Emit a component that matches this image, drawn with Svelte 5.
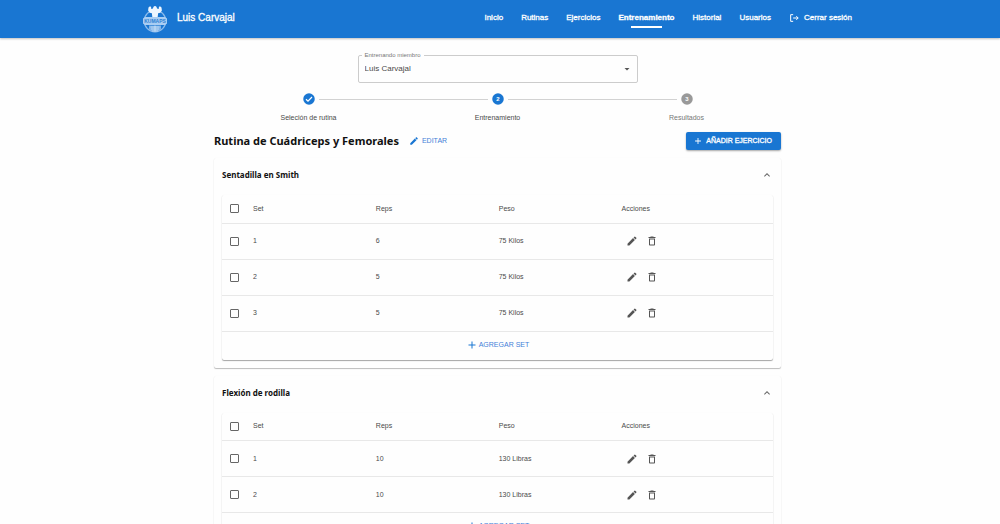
<script>
  const links = ['Inicio', 'Rutinas', 'Ejercicios', 'Entrenamiento', 'Historial', 'Usuarios'];
  const active = 'Entrenamiento';
  const steps = [
    { label: 'Seleción de rutina', state: 'done' },
    { label: 'Entrenamiento', state: 'current' },
    { label: 'Resultados', state: 'pending' }
  ];
  let exercises = $state([
    {
      name: 'Sentadilla en Smith',
      open: true,
      sets: [
        { reps: 6, weight: '75 Kilos' },
        { reps: 5, weight: '75 Kilos' },
        { reps: 5, weight: '75 Kilos' }
      ]
    },
    {
      name: 'Flexión de rodilla',
      open: true,
      sets: [
        { reps: 10, weight: '130 Libras' },
        { reps: 10, weight: '130 Libras' }
      ]
    }
  ]);
</script>

{#snippet pencil()}
  <svg class="icon" viewBox="0 0 24 24" aria-hidden="true"><path d="M3 17.25V21h3.75L17.81 9.94l-3.75-3.75L3 17.25zM20.71 7.04a1 1 0 0 0 0-1.41l-2.34-2.34a1 1 0 0 0-1.41 0l-1.83 1.83 3.75 3.75 1.83-1.83z" /></svg>
{/snippet}
{#snippet plus()}
  <svg class="icon" viewBox="0 0 24 24" aria-hidden="true"><path d="M19 13h-6v6h-2v-6H5v-2h6V5h2v6h6v2z" /></svg>
{/snippet}

<header>
  <div class="bar">
    <a class="brand" href="#inicio">
      <svg class="logo" viewBox="0 0 26 28" aria-hidden="true">
        <circle cx="13" cy="16" r="10.800" fill="none" stroke="#8fbdec" stroke-width="1.300" />
        <path d="M7 20.500h12v3.500l-2.500 3h-7L7 24z" fill="#7fb2e8" />
        <path d="M8.500 22h9M9 24h8M10 26h6M13 20.500v6" stroke="#dcebfb" stroke-width=".7" />
        <path d="M13 1c1.200 0 1.900 1 1.800 2.100l1.100.8 1.100-.5-.2-1.500 1.200-.7 1.500 1.400.4 2.900-1.700 2.200-2.100.6-.4 3.700h-5.400l-.4-3.700-2.100-.6-1.700-2.200.4-2.900 1.500-1.400 1.200.7-.2 1.500 1.100.5 1.100-.8C11.100 2 11.800 1 13 1z" fill="#eef6ff" />
        <path d="M1 13.500 3 12h20l2 1.500v5L23 20H3l-2-1.500z" fill="#a9cdf3" />
        <text x="13" y="17.900" text-anchor="middle">KUMAPS</text>
      </svg>
      <span>Luis Carvajal</span>
    </a>
    <nav>
      {#each links as link}
        <a href="#{link.toLowerCase()}" class:active={link === active}>{link}</a>
      {/each}
      <button class="logout">
        <svg class="exit" viewBox="0 0 24 24" aria-hidden="true"><path d="M10 4H4v16h6M10 12h12M17.500 7.500 22 12l-4.500 4.500" fill="none" stroke="currentColor" stroke-width="2.400" /></svg>
        Cerrar sesión
      </button>
    </nav>
  </div>
</header>

<main>
  <div class="field">
    <label for="member">Entrenando miembro</label>
    <select id="member">
      <option>Luis Carvajal</option>
    </select>
    <svg class="arrow" viewBox="0 0 24 24" aria-hidden="true"><path d="m7 10 5 5 5-5z" /></svg>
  </div>

  <ol class="stepper">
    {#each steps as step, i}
      <li class={step.state}>
        <svg class="dot" viewBox="0 0 24 24" aria-hidden="true">
          <circle cx="12" cy="12" r="11.500" />
          {#if step.state === 'done'}
            <path d="m6 12.500 4 4 8-8.500" fill="none" stroke="#fff" stroke-width="2.400" />
          {:else}
            <text x="12" y="16.500" text-anchor="middle">{i + 1}</text>
          {/if}
        </svg>
        <span>{step.label}</span>
      </li>
    {/each}
  </ol>

  <div class="heading">
    <h1>Rutina de Cuádriceps y Femorales</h1>
    <button class="text">{@render pencil()}EDITAR</button>
    <button class="primary">{@render plus()}AÑADIR EJERCICIO</button>
  </div>

  {#each exercises as exercise}
    <section>
      <h2>
        <button aria-expanded={exercise.open} onclick={() => (exercise.open = !exercise.open)}>
          {exercise.name}
          <svg class="chevron" viewBox="0 0 24 24" aria-hidden="true"><path d="m12 8-6 6 1.410 1.410L12 10.830l4.590 4.580L18 14z" /></svg>
        </button>
      </h2>
      {#if exercise.open}
        <div class="paper">
          <table>
            <colgroup><col class="check" /><col class="data" /><col class="data" /><col class="data" /><col /></colgroup>
            <thead>
              <tr>
                <th><input type="checkbox" aria-label="Seleccionar todos" /></th>
                <th>Set</th>
                <th>Reps</th>
                <th>Peso</th>
                <th>Acciones</th>
              </tr>
            </thead>
            <tbody>
              {#each exercise.sets as set, i}
                <tr>
                  <td><input type="checkbox" aria-label="Seleccionar set {i + 1}" /></td>
                  <td>{i + 1}</td>
                  <td>{set.reps}</td>
                  <td>{set.weight}</td>
                  <td>
                    <div class="actions">
                      <button aria-label="Editar">{@render pencil()}</button>
                      <button aria-label="Eliminar">
                        <svg class="icon" viewBox="0 0 24 24" aria-hidden="true"><path d="M6 19c0 1.100.9 2 2 2h8c1.100 0 2-.9 2-2V7H6v12zM8 9h8v10H8V9zm7.500-5-1-1h-5l-1 1H5v2h14V4z" /></svg>
                      </button>
                    </div>
                  </td>
                </tr>
              {/each}
            </tbody>
          </table>
          <div class="add"><button class="text">{@render plus()}AGREGAR SET</button></div>
        </div>
      {/if}
    </section>
  {/each}
</main>

<style>
  :global(html) {
    overflow: hidden;
  }
  :global(body) {
    background: #fefefe;
    color: #4a4a4a;
    font: 7px/12px 'Liberation Sans', Arial, sans-serif;
  }
  button,
  select {
    margin: 0;
    padding: 0;
    border: 0;
    background: none;
    color: inherit;
    font: inherit;
    cursor: pointer;
  }
  a {
    color: inherit;
    text-decoration: none;
  }
  .icon {
    width: 12px;
    height: 12px;
    fill: currentColor;
    flex: none;
  }
  header {
    background: #1976d2;
    color: #fff;
    box-shadow: 0 1px 2px rgba(0, 0, 0, 0.25);
  }
  .bar {
    display: flex;
    align-items: center;
    justify-content: space-between;
    max-width: 710px;
    height: 38px;
    margin: 0 auto;
    padding-right: 6px;
  }
  .brand {
    display: flex;
    align-items: center;
    gap: 9px;
    font-size: 10px;
    -webkit-text-stroke: 0.3px currentColor;
  }
  .logo {
    width: 26px;
    height: 28px;
    -webkit-text-stroke: 0;
  }
  .logo text {
    font: bold 5px 'Liberation Sans', sans-serif;
    fill: #2f7fd2;
  }
  .brand span {
    margin-bottom: 2px;
  }
  nav {
    display: flex;
    align-items: center;
    gap: 18px;
    margin-bottom: 2px;
    font-size: 8px;
    -webkit-text-stroke: 0.3px currentColor;
  }
  .active {
    position: relative;
    font-weight: bold;
  }
  .active::after {
    content: '';
    position: absolute;
    bottom: -4px;
    left: 22%;
    right: 22%;
    height: 2px;
    background: #fff;
  }
  .logout {
    display: flex;
    align-items: center;
    gap: 5px;
  }
  .exit {
    width: 10px;
    height: 10px;
  }
  main {
    max-width: 567px;
    margin: 0 auto;
    padding: 17px 5px 0 0;
  }
  .field {
    position: relative;
    width: 280px;
    max-width: 100%;
    margin: 0 auto;
  }
  .field label {
    position: absolute;
    top: -6px;
    left: 4px;
    padding: 0 3px;
    background: #fefefe;
    color: #777;
    font-size: 6px;
  }
  select {
    display: block;
    width: 100%;
    height: 28px;
    padding: 0 6px;
    border: 1px solid #ccc;
    border-radius: 2px;
    appearance: none;
    font-size: 8px;
  }
  .arrow {
    position: absolute;
    top: 8px;
    right: 5px;
    width: 12px;
    height: 12px;
    fill: #555;
    pointer-events: none;
  }
  .stepper {
    display: grid;
    grid-template-columns: repeat(3, 1fr);
    margin: 10px 0 0;
    padding: 0;
    list-style: none;
  }
  .stepper li {
    position: relative;
    display: flex;
    flex-direction: column;
    align-items: center;
    gap: 7px;
  }
  .stepper li + li::before {
    content: '';
    position: absolute;
    top: 6px;
    left: calc(-50% + 10px);
    right: calc(50% + 10px);
    height: 1px;
    background: #d2d2d2;
  }
  .dot {
    width: 12px;
    height: 12px;
    fill: #1976d2;
  }
  .dot text {
    font: bold 12px 'Liberation Sans', sans-serif;
    fill: #fff;
  }
  .pending .dot {
    fill: #999;
  }
  .pending {
    color: #777;
  }
  .heading {
    display: flex;
    align-items: center;
    margin-top: 8px;
  }
  h1,
  h2 {
    margin: 0;
    color: #111;
    font-family: 'Noto Sans', 'Open Sans', sans-serif;
    font-weight: 700;
  }
  h1 {
    font-size: 11px;
    line-height: 18px;
  }
  .text {
    display: flex;
    align-items: center;
    gap: 1px;
    color: #4480d8;
  }
  .heading .text {
    gap: 3px;
    margin-left: 10px;
  }
  .text .icon {
    fill: #1976d2;
  }
  .heading .icon {
    width: 10px;
    height: 10px;
  }
  .primary {
    display: flex;
    align-items: center;
    gap: 3px;
    height: 18px;
    margin-left: auto;
    padding: 0 9px 0 7px;
    border-radius: 2px;
    background: #1976d2;
    box-shadow: 0 1px 2px rgba(0, 0, 0, 0.35);
    color: #fff;
    -webkit-text-stroke: 0.3px currentColor;
  }
  section {
    margin-top: 8px;
    padding: 0 8px;
    border-bottom: 8px solid transparent;
    border-radius: 2px;
    box-shadow: 0 1px 1px rgba(0, 0, 0, 0.26), 0 0 1px rgba(0, 0, 0, 0.06);
  }
  h2 button {
    display: flex;
    align-items: center;
    justify-content: space-between;
    width: 100%;
    height: 33px;
    padding-top: 1px;
    font-size: 8px;
  }
  .chevron {
    width: 12px;
    height: 12px;
    fill: #666;
  }
  .paper {
    margin-top: 4px;
    border-radius: 2px;
    box-shadow: 0 1px 1px rgba(0, 0, 0, 0.35), 0 0 1px rgba(0, 0, 0, 0.06);
  }
  table {
    width: 100%;
    border-collapse: collapse;
    table-layout: fixed;
  }
  .check {
    width: 24px;
  }
  .data {
    width: 22.3%;
  }
  th,
  td {
    height: 36px;
    box-sizing: border-box;
    padding: 0 7px;
    border-bottom: 1px solid #e8e8e8;
    text-align: left;
    font-weight: normal;
  }
  th {
    height: 28px;
  }
  input {
    display: block;
    width: 9px;
    height: 9px;
    margin: 0 0 0 1px;
    border: 1px solid #666;
    border-radius: 1px;
    appearance: none;
  }
  input:checked {
    background: #1976d2;
  }
  .actions {
    display: flex;
    gap: 8px;
    padding-left: 4px;
    color: #555;
  }
  .actions button,
  .actions .icon {
    display: block;
  }
  .add {
    display: flex;
    justify-content: center;
    padding: 7px 0 9px;
  }
</style>
